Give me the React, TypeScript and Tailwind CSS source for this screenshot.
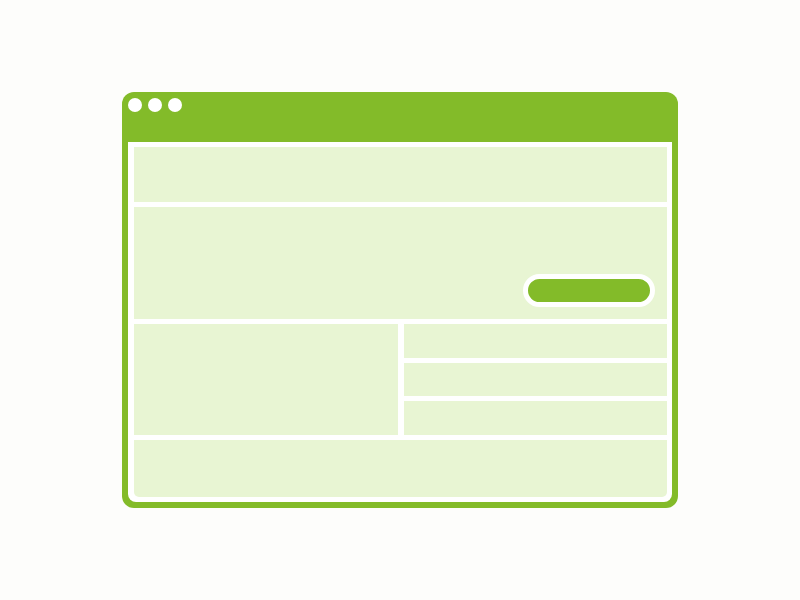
const GREEN = 'bg-[#83bb29]';

function Dot() {
  return <span className="block h-[14px] w-[14px] rounded-full bg-white" />;
}

function Panel({ className = '' }: { className?: string }) {
  return <div className={`bg-[#e8f5d3] ${className}`} />;
}

export default function App() {
  return (
    <div className="flex h-[600px] w-[800px] items-center justify-center bg-[#fdfdfb]">
      <div className={`flex h-[416px] w-[556px] flex-col rounded-[12px] ${GREEN} px-[6px] pb-[6px]`}>
        <div className="flex h-[50px] shrink-0 items-start gap-[6px] pt-[6px]">
          <Dot />
          <Dot />
          <Dot />
        </div>
        <div className="flex flex-1 flex-col gap-[5px] rounded-b-[8px] bg-white pb-[5px] pl-[6px] pr-[5px] pt-[5px]">
          <Panel className="h-[55px]" />
          <div className="flex h-[112px] items-end justify-end bg-[#e8f5d3] p-[12px]">
            <div className={`h-[33px] w-[132px] rounded-full border-[5px] border-white ${GREEN}`} />
          </div>
          <div className="flex h-[111px] gap-[6px]">
            <Panel className="flex-1" />
            <div className="flex flex-1 flex-col gap-[5px]">
              <Panel className="flex-1" />
              <Panel className="flex-1" />
              <Panel className="flex-1" />
            </div>
          </div>
          <Panel className="flex-1 rounded-b-[5px]" />
        </div>
      </div>
    </div>
  );
}
